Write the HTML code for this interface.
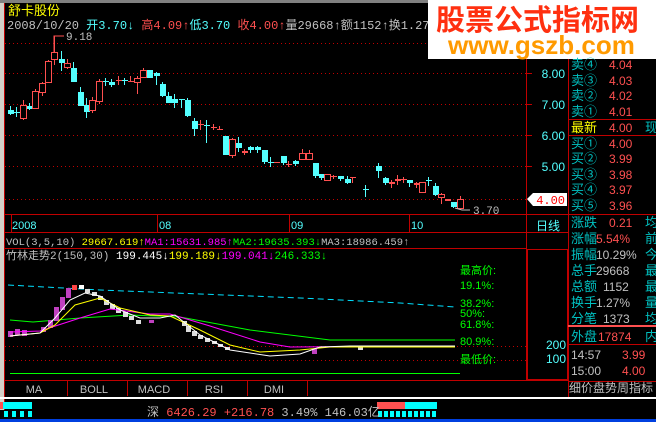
<!DOCTYPE html>
<html><head><meta charset="utf-8"><style>
html,body{margin:0;padding:0;background:#000;width:656px;height:422px;overflow:hidden}
svg{display:block}
text{font-family:"Liberation Sans","Noto Sans CJK SC",sans-serif}
.m{font-family:"Liberation Mono","Noto Sans CJK SC",monospace}
</style></head><body>
<svg id="s" width="656" height="422" xmlns="http://www.w3.org/2000/svg">
<rect width="656" height="422" fill="#000"/>
<rect x="0" y="0" width="4" height="410" fill="#d4d0c8"/>
<rect x="4" y="0" width="1" height="410" fill="#c00000"/>
<rect x="0" y="0" width="430" height="3" fill="#808080"/>
<g stroke="#c00000" stroke-width="1">
<line x1="5" y1="43.5" x2="526" y2="43.5" stroke-dasharray="1,3"/>
<line x1="5" y1="73.5" x2="526" y2="73.5" stroke-dasharray="1,3"/>
<line x1="5" y1="104.5" x2="526" y2="104.5" stroke-dasharray="1,3"/>
<line x1="5" y1="135.5" x2="526" y2="135.5" stroke-dasharray="1,3"/>
<line x1="5" y1="166.5" x2="526" y2="166.5" stroke-dasharray="1,3"/>
<line x1="5" y1="199.5" x2="526" y2="199.5" stroke-dasharray="1,3"/>
<line x1="526.5" y1="30" x2="526.5" y2="380"/>
<line x1="568.5" y1="55" x2="568.5" y2="398"/>
<line x1="5" y1="214.5" x2="568" y2="214.5"/>
<line x1="5" y1="232.5" x2="568" y2="232.5"/>
<line x1="5" y1="248.5" x2="526" y2="248.5"/>
<line x1="5" y1="380.5" x2="568" y2="380.5"/>
<line x1="526" y1="73.5" x2="532" y2="73.5"/><line x1="526" y1="104.5" x2="532" y2="104.5"/><line x1="526" y1="135.5" x2="532" y2="135.5"/><line x1="526" y1="166.5" x2="532" y2="166.5"/>
<line x1="11.5" y1="215" x2="11.5" y2="232"/><line x1="157.5" y1="215" x2="157.5" y2="232"/><line x1="289.5" y1="215" x2="289.5" y2="232"/><line x1="409.5" y1="215" x2="409.5" y2="232"/>
<line x1="67.5" y1="381" x2="67.5" y2="396"/><line x1="127.5" y1="381" x2="127.5" y2="396"/><line x1="187.5" y1="381" x2="187.5" y2="396"/><line x1="247.5" y1="381" x2="247.5" y2="396"/><line x1="307.5" y1="381" x2="307.5" y2="396"/>
<line x1="5" y1="346.5" x2="526" y2="346.5" stroke-dasharray="1,3"/>
<line x1="5" y1="360.5" x2="526" y2="360.5" stroke-dasharray="1,3"/>
<rect x="527.5" y="249.5" width="40" height="130" fill="none"/>
<line x1="568" y1="119.5" x2="656" y2="119.5"/><line x1="568" y1="135.5" x2="656" y2="135.5"/><line x1="568" y1="214.5" x2="656" y2="214.5"/>
<line x1="568" y1="344.5" x2="656" y2="344.5"/><line x1="568" y1="381.5" x2="656" y2="381.5"/>
</g>
<rect x="568" y="325" width="88" height="2" fill="#ff5050"/>
<g id="c"></g>
<polyline points="54,52 54,36 64,36" fill="none" stroke="#ff5050"/>
<text x="66" y="40" fill="#c0c0c0" font-size="11" class="m">9.18</text>
<polyline points="455,208 462,210 470,210" fill="none" stroke="#c0c0c0"/>
<text x="473" y="214" fill="#c0c0c0" font-size="11" class="m">3.70</text>
<text x="8" y="15" fill="#ffff00" font-size="13">舒卡股份</text>
<text x="7" y="29" font-size="12" class="m"><tspan fill="#c0c0c0">2008/10/20 </tspan><tspan fill="#54ffff">开3.70↓</tspan><tspan fill="#ff5050"> 高4.09↑</tspan><tspan fill="#54ffff">低3.70 </tspan><tspan fill="#ff5050">收4.00↑</tspan><tspan fill="#c0c0c0">量29668↑额1152↑换1.27% 振10</tspan></text>
<rect x="428" y="0" width="228" height="59" fill="#fff"/>
<text x="436" y="30" fill="#ff3010" font-size="29" font-weight="bold" font-family="Noto Sans CJK SC,sans-serif">股票公式指标网</text>
<text x="448" y="54" fill="#ff9a00" font-size="26" font-weight="bold">www.gszb.com</text>
<g fill="#54ffff" font-size="12" class="m" text-anchor="end">
<text x="565" y="78">8.00</text><text x="565" y="109">7.00</text><text x="565" y="140">6.00</text><text x="565" y="171">5.00</text>
<text x="566" y="349">200</text><text x="566" y="363">100</text>
</g>
<polygon points="527,199 533,193 567,193 567,206 533,206" fill="#fff"/>
<text x="565" y="204" fill="#ff0000" font-size="12" class="m" text-anchor="end">4.00</text>
<g fill="#54ffff" font-size="11" class="m"><text x="12" y="229">2008</text><text x="159" y="229">08</text><text x="291" y="229">09</text><text x="411" y="229">10</text></g>
<text x="536" y="230" fill="#54ffff" font-size="12">日线</text>
<text x="6" y="245" font-size="10.5" class="m"><tspan fill="#c0c0c0">VOL(3,5,10) </tspan><tspan fill="#ffff00">29667.619↑</tspan><tspan fill="#ff00ff">MA1:15631.985↑</tspan><tspan fill="#00ff00">MA2:19635.393↓</tspan><tspan fill="#c0c0c0">MA3:18986.459↑</tspan></text>
<text x="6" y="259" font-size="11" class="m"><tspan fill="#c0c0c0">竹林走势2(150,30) </tspan><tspan fill="#fff">199.445↓</tspan><tspan fill="#ffff00">199.189↓</tspan><tspan fill="#ff00ff">199.041↓</tspan><tspan fill="#00ff00">246.333↓</tspan></text>
<polyline points="8,285 100,290 200,294 300,298 400,303 455,307" fill="none" stroke="#00e0ff" stroke-dasharray="6,4"/>
<polyline points="10,320 33,322 80,318 130,315 180,317 250,330 330,340 420,340 455,340" fill="none" stroke="#00ff00"/>
<g id="ib"></g>
<polyline points="10,332 40,331 80,318 110,309 150,314 170,314 210,326 260,342 290,347 455,346" fill="none" stroke="#ff00ff"/>
<polyline points="10,336 40,333 55,325 75,305 100,298 120,308 150,315 170,316 200,330 230,345 260,352 300,350 330,347 455,347" fill="none" stroke="#ffff00"/>
<polyline points="10,336 40,333 55,318 70,300 85,293 100,296 120,310 140,318 160,318 175,315 200,335 230,350 270,356 300,354 320,347 350,346 455,346" fill="none" stroke="#fff"/>
<line x1="10" y1="373.5" x2="460" y2="373.5" stroke="#00ff00"/>
<g fill="#00ff00" font-size="11" class="m">
<text x="460" y="274">最高价:</text><text x="460" y="289">19.1%:</text><text x="460" y="307">38.2%:</text><text x="460" y="317">50%:</text><text x="460" y="328">61.8%:</text><text x="460" y="345">80.9%:</text><text x="460" y="363">最低价:</text>
</g>
<g fill="#c0c0c0" font-size="11" font-family="Liberation Serif,serif" text-anchor="middle">
<text x="34" y="393">MA</text><text x="94" y="393">BOLL</text><text x="154" y="393">MACD</text><text x="214" y="393">RSI</text><text x="274" y="393">DMI</text>
</g>
<rect x="0" y="397" width="656" height="2" fill="#fff"/>
<rect x="0" y="419" width="656" height="3" fill="#0040e0"/>
<rect x="0" y="402" width="3" height="7" fill="#ff5050"/>
<rect x="3" y="402" width="29" height="7" fill="#00ffff"/>
<g fill="#00ffff"><rect x="4" y="411" width="4" height="6"/><rect x="12" y="411" width="4" height="6"/><rect x="20" y="411" width="4" height="6"/><rect x="28" y="411" width="4" height="6"/></g>
<rect x="377" y="402" width="28" height="7" fill="#ff5050"/>
<rect x="405" y="402" width="32" height="7" fill="#00ffff"/>
<g id="sq" fill="#00ffff"></g>
<text x="147" y="416" font-size="12" class="m"><tspan fill="#c0c0c0">深 </tspan><tspan fill="#ff5050">6426.29 +216.78 </tspan><tspan fill="#c0c0c0">3.49% 146.03亿</tspan></text>
<g font-size="13" font-family="Liberation Mono,Noto Sans CJK SC,monospace">
<g fill="#00c0c0">
<text x="571" y="69">卖④</text><text x="571" y="85">卖③</text><text x="571" y="100">卖②</text><text x="571" y="116">卖①</text>
<text x="571" y="148">买①</text><text x="571" y="163">买②</text><text x="571" y="179">买③</text><text x="571" y="194">买④</text><text x="571" y="210">买⑤</text>
<text x="571" y="227">涨跌</text><text x="571" y="243">涨幅</text><text x="571" y="259">振幅</text><text x="571" y="275">总手</text><text x="571" y="291">总额</text><text x="571" y="307">换手</text><text x="571" y="323">分笔</text><text x="571" y="341">外盘</text>
<text x="645" y="132">现</text><text x="645" y="227">均</text><text x="645" y="243">前</text><text x="645" y="259">今</text><text x="645" y="275">最</text><text x="645" y="291">最</text><text x="645" y="307">量</text><text x="645" y="323">均</text><text x="645" y="341">内</text>
</g>
<text x="571" y="132" fill="#ffff00">最新</text>
<g fill="#ff5050" font-size="12">
<text x="609" y="69">4.04</text><text x="609" y="85">4.03</text><text x="609" y="100">4.02</text><text x="609" y="116">4.01</text><text x="609" y="132">4.00</text>
<text x="609" y="148">4.00</text><text x="609" y="163">3.99</text><text x="609" y="179">3.98</text><text x="609" y="194">3.97</text><text x="609" y="210">3.96</text>
<text x="609" y="227">0.21</text><text x="596" y="243">5.54%</text><text x="598" y="341">17874</text>
<text x="622" y="359">3.99</text><text x="622" y="375">4.00</text>
</g>
<g fill="#c0c0c0" font-size="12">
<text x="596" y="259">10.29%</text><text x="596" y="275">29668</text><text x="603" y="291">1152</text><text x="596" y="307">1.27%</text><text x="603" y="323">1373</text>
<text x="571" y="359">14:57</text><text x="571" y="375">15:00</text>
</g>
<text x="569" y="392" fill="#c0c0c0" font-size="12">细价盘势周指标</text>
</g>
</svg>
<script>
var d=[[10,110,114,106,115,0,0],[16,112,113,107,117,0,0],[23,105,118,100,120,1,1],[29,106,109,103,110,0,0],[35,91,108,89,108,1,1],[42,83,92,82,96,1,1],[48,61,82,60,82,1,1],[54,52,59,36,65,1,1],[61,59,63,51,71,0,0],[67,63,67,59,69,1,1],[73,68,82,62,82,0,0],[80,92,106,87,106,0,0],[86,105,112,98,118,0,0],[92,100,110,97,113,1,1],[99,81,101,79,104,1,1],[105,81,82,78,86,0,0],[111,82,85,79,87,0,0],[118,80,81,76,85,1,0],[124,80,81,78,85,0,0],[130,81,82,76,82,1,0],[137,78,82,76,94,1,1],[143,70,77,68,77,1,1],[149,70,78,70,78,0,0],[156,73,76,72,85,0,0],[162,84,96,82,97,0,0],[168,96,103,92,103,0,0],[174,99,103,94,108,0,0],[181,99,100,99,108,0,0],[187,100,116,98,117,0,0],[194,121,129,118,136,0,0],[200,124,125,120,130,1,0],[206,125,126,120,143,0,0],[213,127,128,124,130,1,0],[219,129,130,126,130,1,0],[225,136,155,136,155,0,0],[232,139,155,138,158,1,1],[238,143,148,137,152,0,0],[244,151,153,149,155,1,0],[250,147,150,146,153,0,0],[257,147,150,146,153,0,0],[264,150,162,150,164,0,0],[270,162,163,157,167,0,0],[276,162,163,162,163,1,0],[283,156,163,156,165,0,0],[288,164,165,161,167,1,0],[295,161,164,160,166,0,0],[302,153,159,149,159,1,1],[309,153,159,150,160,1,1],[315,163,176,163,178,0,0],[321,174,178,174,180,0,0],[327,174,180,174,180,1,1],[333,176,177,175,179,1,0],[340,176,179,176,181,0,0],[347,179,183,176,184,0,0],[352,177,178,177,183,1,0],[365,189,190,185,197,0,0],[378,166,171,163,178,0,0],[385,178,183,177,185,0,0],[391,182,184,180,188,1,0],[397,179,181,175,185,1,0],[403,179,180,177,183,1,0],[409,180,183,180,187,0,0],[416,183,185,182,188,1,0],[422,182,192,182,192,1,1],[428,180,181,177,186,0,0],[435,186,195,183,196,0,0],[441,194,197,193,204,1,1],[447,199,201,199,201,1,0],[453,202,207,202,208,0,0],[460,199,208,196,208,1,1]];
var h='';d.forEach(function(c){var col=c[5]?'#ff5050':'#54ffff',x=c[0];h+='<line x1="'+(x+.5)+'" y1="'+c[3]+'" x2="'+(x+.5)+'" y2="'+c[4]+'" stroke="'+col+'"/>';var hh=Math.max(c[2]-c[1],1);if(c[6])h+='<rect x="'+(x-2.5)+'" y="'+(c[1]+.5)+'" width="6" height="'+hh+'" fill="#000" stroke="'+col+'"/>';else h+='<rect x="'+(x-2)+'" y="'+c[1]+'" width="6" height="'+hh+'" fill="'+col+'"/>';});
document.getElementById('c').innerHTML=h;
var b=[[8,331,6,'#c040c0'],[15,329,6,'#c040c0'],[22,330,6,'#c040c0'],[41,327,5,'#c040c0'],[48,320,8,'#c040c0'],[54,307,14,'#c040c0'],[60,297,13,'#c040c0'],[66,288,10,'#c040c0'],[72,285,5,'#f44'],[79,285,4,'#fff'],[85,289,4,'#ddd'],[92,292,4,'#ddd'],[98,296,4,'#ddd'],[104,300,5,'#ddd'],[110,304,5,'#ddd'],[116,308,5,'#ddd'],[123,312,5,'#ddd'],[129,316,4,'#ddd'],[136,320,4,'#ddd'],[149,320,3,'#c040c0'],[182,321,5,'#ddd'],[186,326,6,'#ddd'],[192,331,5,'#ddd'],[198,335,4,'#ddd'],[205,338,4,'#ddd'],[212,341,3,'#ddd'],[218,344,3,'#ddd'],[225,347,3,'#ddd'],[312,349,5,'#c040c0'],[358,347,3,'#ddd']];
var g='';b.forEach(function(r){g+='<rect x="'+r[0]+'" y="'+r[1]+'" width="5" height="'+r[2]+'" fill="'+r[3]+'"/>';});document.getElementById('ib').innerHTML=g;
var q='';for(var i=0;i<10;i++)q+='<rect x="'+(378+i*6)+'" y="411" width="4" height="6"/>';document.getElementById('sq').innerHTML=q;
</script>
</body></html>
